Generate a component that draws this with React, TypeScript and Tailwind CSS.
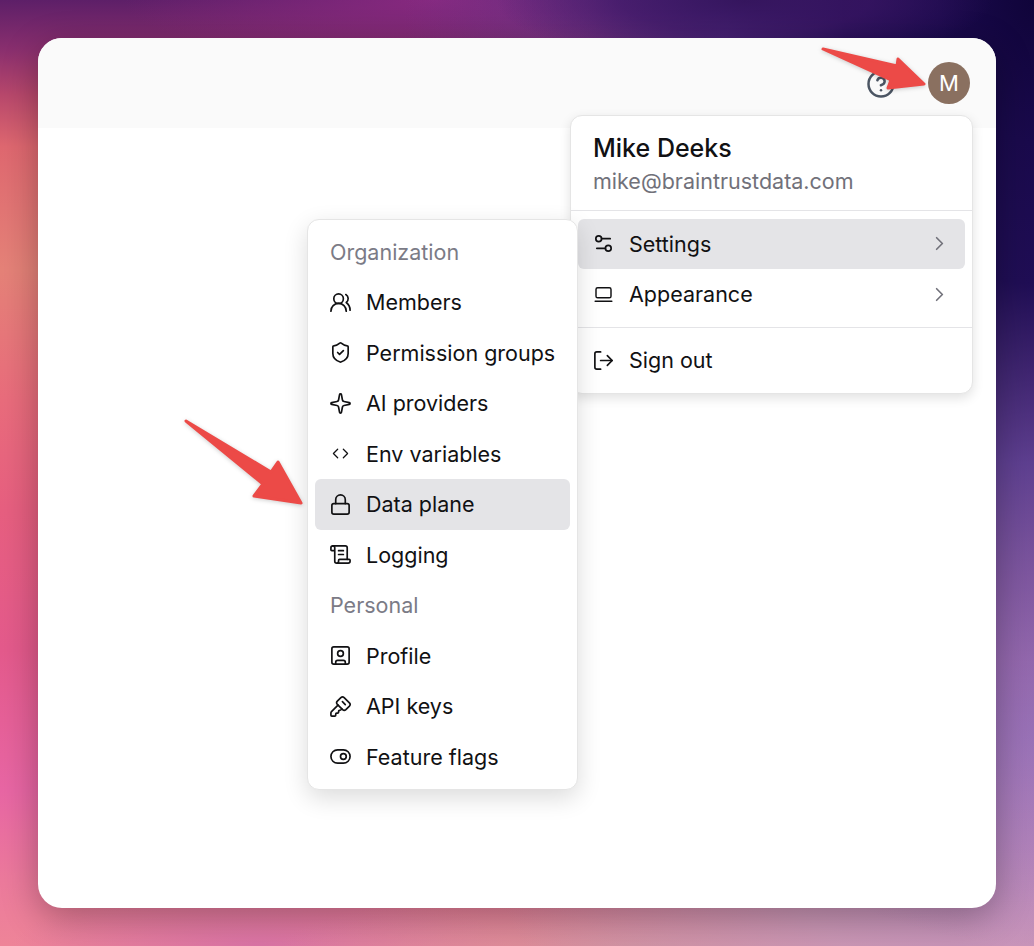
import React from 'react';
import {
    ChevronRight,
    CircleHelp,
    Code,
    KeySquare,
    LaptopMinimal,
    Lock,
    LogOut,
    LucideIcon,
    ScrollText,
    Settings2,
    ShieldCheck,
    Sparkle,
    SquareUser,
    ToggleRight,
    UsersRound,
} from 'lucide-react';

interface MenuRowProps {
    icon: LucideIcon;
    label: string;
    active?: boolean;
    chevron?: boolean;
    iconClass?: string;
}

const MenuRow: React.FC<MenuRowProps> = ({ icon: Icon, label, active, chevron, iconClass = '' }) => (
    <div className={`flex h-[50.5px] items-center gap-[14px] rounded-[6px] px-[14px] ${active ? 'bg-[#e4e4e7]' : ''}`}>
        <Icon size={23} strokeWidth={1.75} className={`shrink-0 text-[#111113] ${iconClass}`} />
        <span className="flex-1 text-[21.5px] text-[#111113]">{label}</span>
        {chevron && <ChevronRight size={23} strokeWidth={1.75} className="text-[#71717a]" />}
    </div>
);

const GroupLabel: React.FC<{ label: string }> = ({ label }) => (
    <div className="flex h-[50.5px] items-center px-[15px] text-[21.5px] text-[#7b7b86]">{label}</div>
);

const Arrow: React.FC<{ className: string; width: number; height: number; points: string }> = ({ className, width, height, points }) => (
    <svg className={`absolute z-20 drop-shadow-[0_1px_2px_rgba(0,0,0,0.2)] ${className}`} width={width} height={height} viewBox={`0 0 ${width} ${height}`}>
        <polygon points={points} fill="#ec4a47" stroke="#ec4a47" strokeWidth={3} strokeLinejoin="round" />
    </svg>
);

export default function App() {
    return (
        <div className="h-[946px] overflow-hidden bg-[radial-gradient(ellipse_24%_7%_at_72%_0%,rgba(52,20,92,0.95)_0%,rgba(60,22,100,0.7)_50%,transparent_100%),radial-gradient(ellipse_61%_100%_at_100%_0%,#10043a_0%,#1a0a4c_15%,#200e55_30%,rgba(75,50,140,0.85)_49%,rgba(100,60,150,0.45)_70%,transparent_100%),radial-gradient(ellipse_30%_7%_at_42%_0%,rgba(140,42,130,0.9)_0%,transparent_100%),radial-gradient(ellipse_55%_50%_at_100%_78%,#b48cc8_0%,rgba(196,154,188,0.8)_55%,transparent_100%),radial-gradient(ellipse_35%_6%_at_62%_100%,rgba(214,146,156,0.95)_0%,transparent_100%),radial-gradient(ellipse_24%_6%_at_25%_100%,rgba(214,112,170,0.8)_0%,transparent_100%),linear-gradient(180deg,#5d1f68_0%,#8a2f6e_5.3%,#b8486c_10%,#df6870_15.5%,#e58278_28.5%,#e96c7c_42.3%,#e75f80_53.9%,#e45a8c_68.7%,#e866a4_83.5%,#ec7a9c_93%,#ee8498_100%)] p-[38px] font-['Inter',sans-serif]">
            <div className="relative h-[870px] rounded-[24px] bg-white shadow-[0_10px_36px_rgba(0,0,0,0.3)]">
                <header className="flex h-[90px] items-center justify-end gap-[32px] rounded-t-[24px] bg-[#fafafa] pr-[26px]">
                    <CircleHelp size={30} strokeWidth={2} className="mt-px text-[#4b5563]" />
                    <div className="flex h-[42px] w-[42px] items-center justify-center rounded-full bg-[#8a7060] text-[22px] text-white">M</div>
                </header>

                {/* user menu */}
                <div className="absolute left-[532px] top-[77px] z-0 w-[403px] rounded-[12px] border border-[#e5e5e5] bg-white shadow-[0_4px_12px_rgba(0,0,0,0.12)]">
                    <div className="h-[95px] border-b border-[#e4e4e7] px-[22px] pt-[14px]">
                        <div className="text-[25px] font-medium leading-[36px] text-[#111113]">Mike Deeks</div>
                        <div className="text-[21.5px] leading-[30px] text-[#71717a]">mike@braintrustdata.com</div>
                    </div>
                    <div className="px-[7px] pt-[7.5px]">
                        <MenuRow icon={Settings2} label="Settings" active chevron />
                        <MenuRow icon={LaptopMinimal} label="Appearance" chevron iconClass="p-[1.5px]" />
                    </div>
                    <div className="mb-[7px] mt-[7.5px] h-px bg-[#e4e4e7]" />
                    <div className="px-[7px] pb-[7px]">
                        <MenuRow icon={LogOut} label="Sign out" />
                    </div>
                </div>

                {/* settings submenu */}
                <div className="absolute left-[269px] top-[181px] z-10 w-[271px] rounded-[12px] border border-[#e5e5e5] bg-white px-[7px] py-[6.5px] shadow-[0_8px_24px_rgba(0,0,0,0.14)]">
                    <GroupLabel label="Organization" />
                    <MenuRow icon={UsersRound} label="Members" />
                    <MenuRow icon={ShieldCheck} label="Permission groups" />
                    <MenuRow icon={Sparkle} label="AI providers" />
                    <MenuRow icon={Code} label="Env variables" iconClass="p-[3px]" />
                    <MenuRow icon={Lock} label="Data plane" active />
                    <MenuRow icon={ScrollText} label="Logging" />
                    <GroupLabel label="Personal" />
                    <MenuRow icon={SquareUser} label="Profile" />
                    <MenuRow icon={KeySquare} label="API keys" />
                    <MenuRow icon={ToggleRight} label="Feature flags" />
                </div>

                <Arrow className="left-[781px] top-[7px]" width={110} height={48} points="4,4 78,21 79,14 105,39 69,43 72,35" />
                <Arrow className="left-[144px] top-[379px]" width={124} height={90} points="4,4 89,55 96,45 119,86 72,79 81,67" />
            </div>
        </div>
    );
}
